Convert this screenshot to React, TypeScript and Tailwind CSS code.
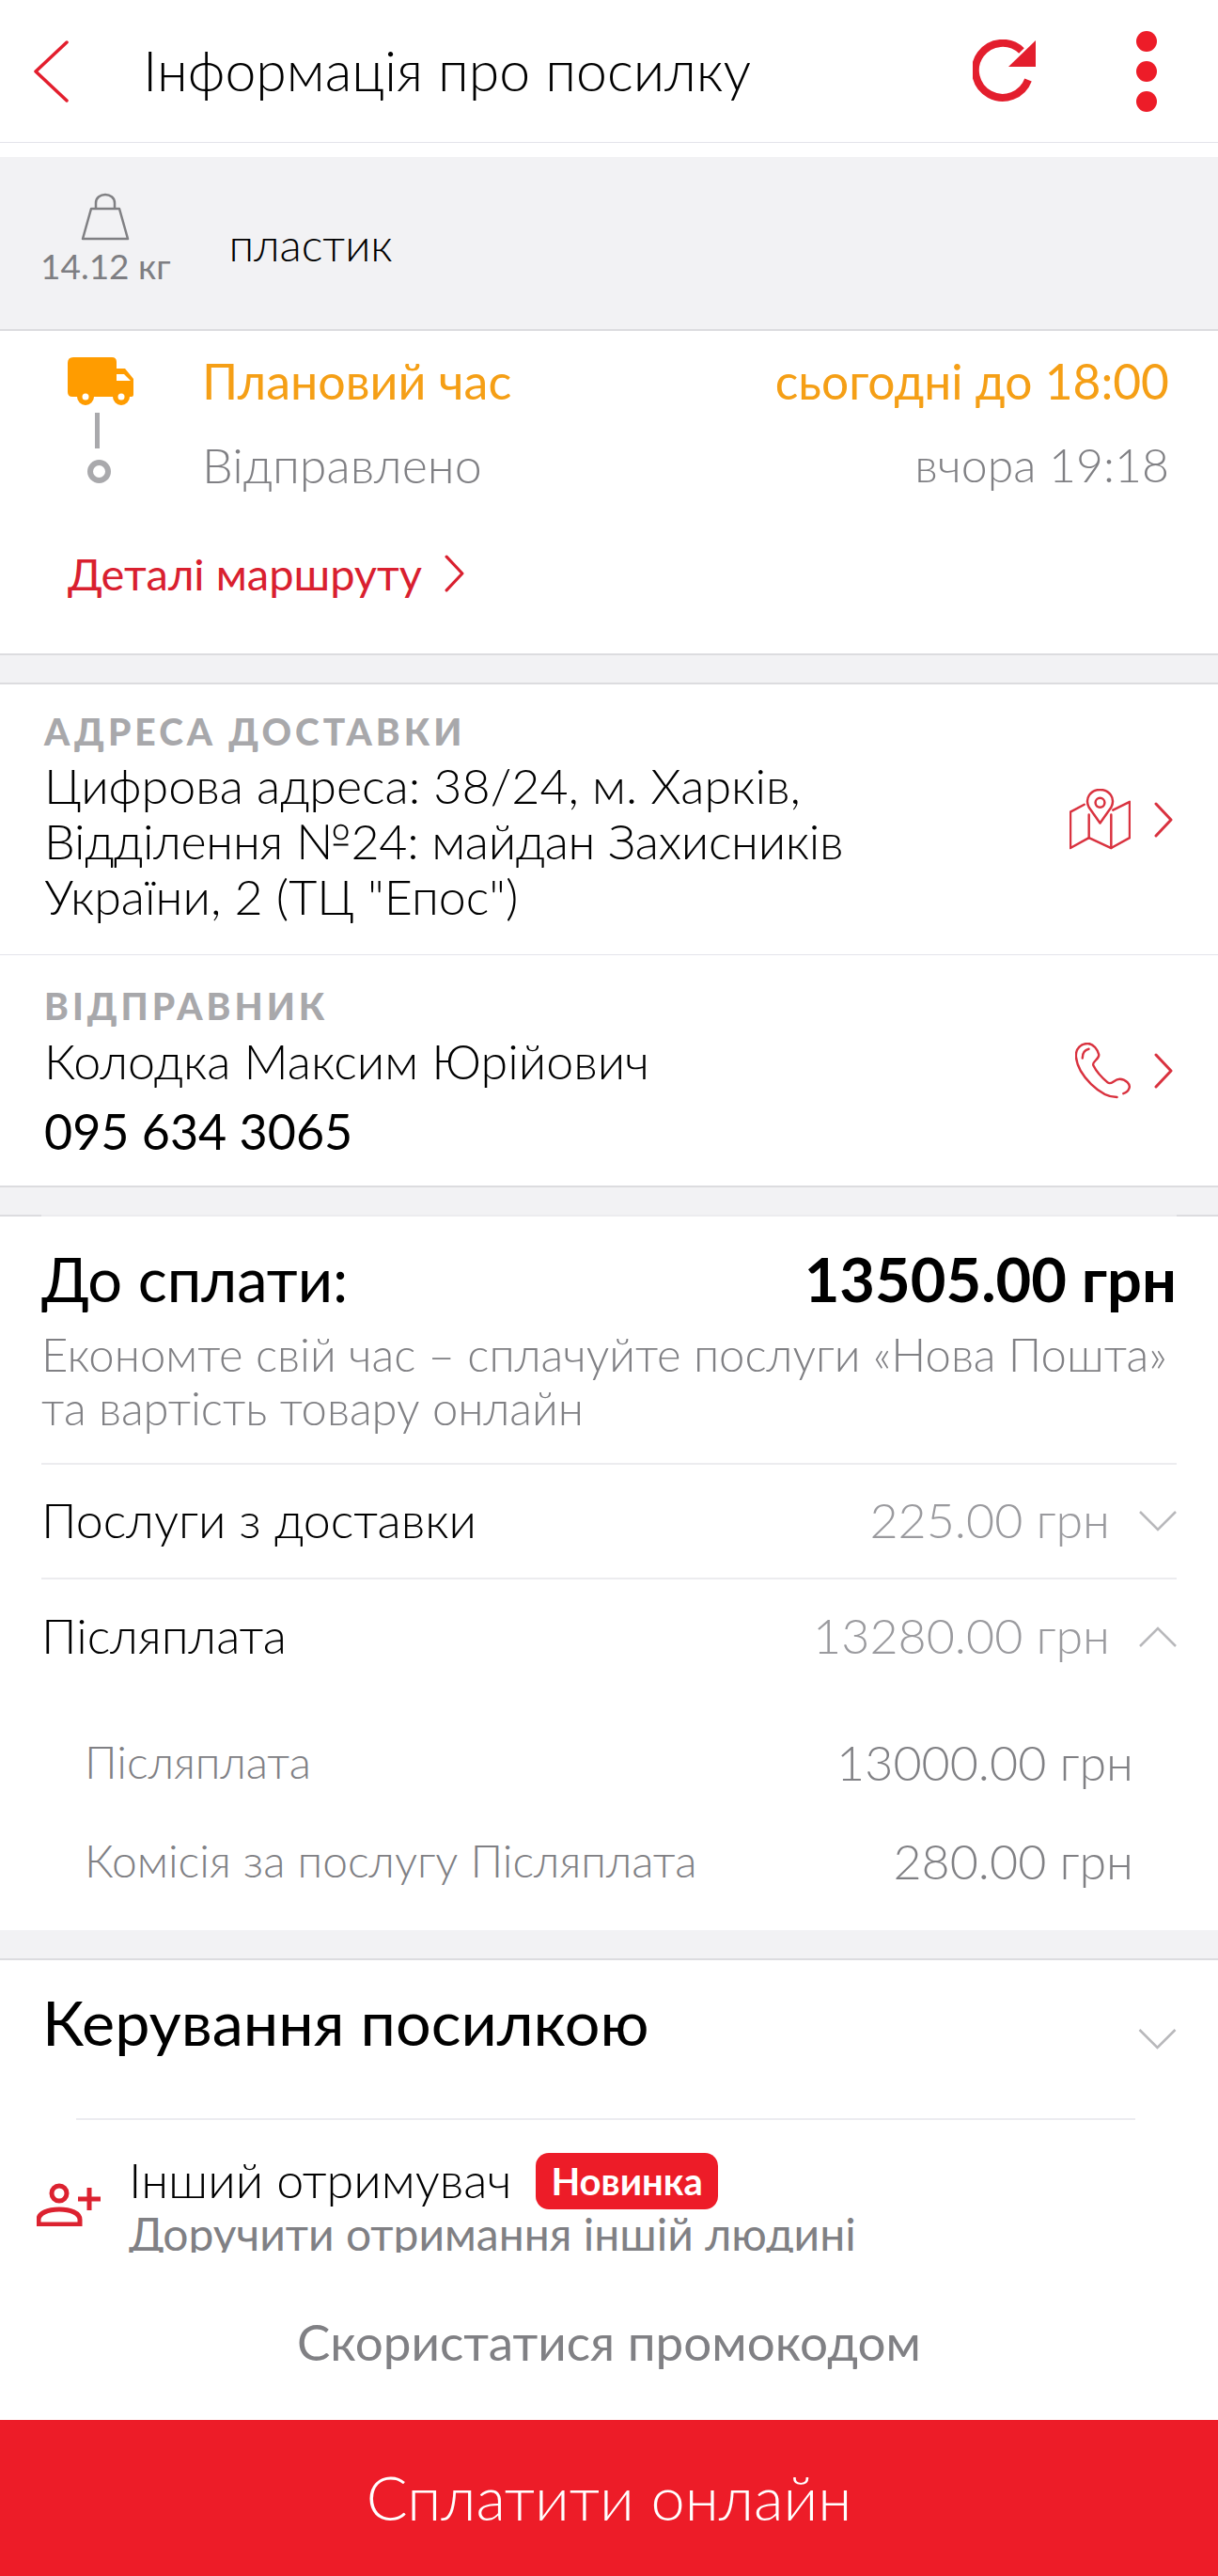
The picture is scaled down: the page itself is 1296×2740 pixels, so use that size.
const font = "font-['Lato','Noto_Sans',sans-serif]";

const Chevron = ({ className }: { className: string }) => (
  <svg viewBox="0 0 20 38" className={className} fill="none" stroke="currentColor" strokeWidth="3" strokeLinecap="round" strokeLinejoin="round">
    <path d="M2 2 L18 19 L2 36" />
  </svg>
);

const Down = ({ className }: { className: string }) => (
  <svg viewBox="0 0 40 22" className={className} fill="none" stroke="currentColor" strokeWidth="2.500"><path d="M1 1 L20 20 L39 1" /></svg>
);

const Up = ({ className }: { className: string }) => (
  <svg viewBox="0 0 40 22" className={className} fill="none" stroke="currentColor" strokeWidth="2.500"><path d="M1 21 L20 2 L39 21" /></svg>
);

const App = () => {
  return (
    <div className={`relative h-[2740px] w-[1296px] overflow-hidden bg-white text-black ${font} font-light`}>
      {/* header */}
      <div className="flex h-[152px] items-center border-b border-[#e4e4ea] pl-[35px] pr-[65px]">
        <svg viewBox="0 0 40 66" className="h-[66px] w-[40px] text-[#e31e2d]" fill="none" stroke="currentColor" strokeWidth="3.500" strokeLinecap="round" strokeLinejoin="round">
          <path d="M36 2 L3 33 L36 64" />
        </svg>
        <h1 className="mb-[3px] ml-[77px] text-[59px] leading-none whitespace-nowrap">Інформація про посилку</h1>
        <svg viewBox="0 0 68 68" className="ml-auto h-[68px] w-[68px] text-[#e31e2d]">
          <path d="M59 43 A29 29 0 1 1 52 12" fill="none" stroke="currentColor" strokeWidth="8" />
          <path d="M38 29 L67 1 L67 29 Z" fill="currentColor" />
        </svg>
        <div className="ml-[106px] flex flex-col gap-[10px]">
          <span className="h-[22px] w-[22px] rounded-full bg-[#ed1c28]" />
          <span className="h-[22px] w-[22px] rounded-full bg-[#ed1c28]" />
          <span className="h-[22px] w-[22px] rounded-full bg-[#ed1c28]" />
        </div>
      </div>

      {/* parcel */}
      <div className="mt-[15px] flex h-[185px] items-start border-b-2 border-[#dcdcdf] bg-[#f2f2f4] pl-[43px] pt-[38px]">
        <div className="flex flex-col items-center">
          <svg viewBox="0 0 52 52" className="h-[52px] w-[52px] text-[#808083]" fill="none" stroke="currentColor" strokeWidth="2.500" strokeLinejoin="round">
            <path d="M16 17 V11 C16 -1 36 -1 36 11 V17" />
            <path d="M11 17 H41 L50 49 H2 Z" />
          </svg>
          <span className="mt-[6px] text-[37px] leading-[40px] font-normal text-[#7e7e82]">14.12 кг</span>
        </div>
        <span className="ml-[62px] mt-[30px] text-[48px] leading-[50px]">пластик</span>
      </div>

      {/* status */}
      <div className="h-[343px] pl-[72px] pr-[52px] pt-[28px]">
        <div className="flex">
          <div className="flex w-[143px] flex-col items-start">
            <svg viewBox="0 0 70 52" className="h-[52px] w-[70px] text-[#ff9c00]" fill="currentColor">
              <path d="M6 0 H47 Q52 0 52 5 V12 H61 L70 23 V40 Q70 42 68 42 H66 A9 9 0 0 1 48 42 H28 A9 9 0 0 1 10 42 H5 Q0 42 0 37 V6 Q0 0 6 0 Z" />
              <path d="M52 18 V25 H67 L60 18 Z" fill="#fff" />
              <circle cx="19" cy="42" r="3.500" fill="#fff" />
              <circle cx="57" cy="42" r="3.500" fill="#fff" />
            </svg>
            <span className="ml-[29px] mt-[7px] h-[38px] w-[5px] bg-[#a9a9ac]" />
            <span className="ml-[21px] mt-[12px] h-[25px] w-[25px] rounded-full border-[6px] border-[#a9a9ac]" />
          </div>
          <div className="mt-[-2px] flex-1">
            <div className="flex justify-between font-normal leading-[54px] text-[#f59f16]">
              <span className="text-[52px]">Плановий час</span>
              <span className="text-[51.500px]">сьогодні до 18:00</span>
            </div>
            <div className="mt-[35px] flex justify-between leading-[54px] text-[#808084]">
              <span className="text-[52px]">Відправлено</span>
              <span className="text-[50px]">вчора 19:18</span>
            </div>
          </div>
        </div>
        <div className="mt-[62px] flex items-center gap-[24px] text-[#d9202f]">
          <span className="text-[47px] leading-[54px] font-normal">Деталі маршруту</span>
          <Chevron className="h-[40px] w-[21px]" />
        </div>
      </div>

      <div className="h-[33px] border-y-2 border-[#dcdcdf] bg-[#f2f2f4]" />

      {/* address */}
      <div className="flex h-[288px] items-center justify-between border-b border-[#e4e4ea] pl-[47px] pr-[48px]">
        <div className="self-start pt-[28px]">
          <div className="text-[39px] leading-[44px] font-black tracking-[4px] text-[#a8a8ab]">АДРЕСА ДОСТАВКИ</div>
          <div className="mt-[6px] text-[52px] leading-[59px] whitespace-nowrap">
            Цифрова адреса: 38/24, м. Харків,<br />
            <span className="tracking-[-0.3px]">Відділення №24: майдан Захисників</span><br />
            України, 2 (ТЦ "Епос")
          </div>
        </div>
        <div className="flex items-center gap-[25px] text-[#d9323f]">
          <svg viewBox="0 0 66 66" className="h-[65px] w-[65px]" fill="none" stroke="currentColor" strokeWidth="2.500" strokeLinejoin="round" strokeLinecap="round">
            <path d="M16 17 L1 25 V64 L21 53 L45 64 L65 53 V14 L47 23" />
            <path d="M21 28 V53 M45 28 V64" />
            <path d="M33 37 L21 20 C16 10 23 1 33 1 C43 1 50 10 45 20 Z" />
            <circle cx="33" cy="15" r="5" />
          </svg>
          <Chevron className="h-[38px] w-[20px]" />
        </div>
      </div>

      {/* sender */}
      <div className="flex h-[247px] items-center justify-between border-b-2 border-[#dcdcdf] pl-[47px] pr-[48px]">
        <div className="self-start pt-[32px]">
          <div className="text-[39px] leading-[44px] font-black tracking-[4px] text-[#a8a8ab]">ВІДПРАВНИК</div>
          <div className="mt-[7px] text-[52px] leading-[58px]">Колодка Максим Юрійович</div>
          <div className="mt-[17px] text-[52px] leading-[58px] font-normal">095 634 3065</div>
        </div>
        <div className="flex items-center gap-[24px] text-[#d9323f]">
          <svg viewBox="0 0 62 62" className="h-[60px] w-[60px]" fill="none" stroke="currentColor" strokeWidth="2.500" strokeLinejoin="round" strokeLinecap="round">
            <path d="M46 60 C28 60 3 36 1 16 C0 6 7 1 14 1 C20 1 25 8 26 13 C27 18 18 21 20 25 C24 33 30 39 36 44 C40 47 43 40 49 40 C55 40 62 46 59 51 C58 54 56 55 53 56" />
            <path d="M8 17 C8 11 11 8 15 7" />
          </svg>
          <Chevron className="h-[38px] w-[20px]" />
        </div>
      </div>

      <div className="h-[29px] bg-[#f2f2f4]" />
      <div className="flex h-[2px] justify-between bg-[#ececef]">
        <span className="w-[44px] bg-[#dcdcdf]" />
        <span className="w-[44px] bg-[#dcdcdf]" />
      </div>

      {/* payment */}
      <div className="h-[759px] px-[44px]">
        <div className="flex items-center justify-between pt-[33px]">
          <span className="text-[65px] leading-[66px] font-normal">До сплати:</span>
          <span className="text-[65px] leading-[66px] font-bold">13505.00 грн</span>
        </div>
        <p className="mt-[19px] text-[49px] leading-[57px] whitespace-nowrap text-[#808084]">
          Економте свій час – сплачуйте послуги «Нова Пошта»<br />
          та вартість товару онлайн
        </p>
        <div className="mt-[30px] flex h-[124px] items-center justify-between border-y-2 border-[#ececef]">
          <span className="pb-[4px] text-[52px]">Послуги з доставки</span>
          <span className="flex items-center gap-[31px] text-[52px] text-[#9a9a9e]">
            <span className="pb-[4px]">225.00 грн</span>
            <Down className="h-[22px] w-[40px] text-[#b8b8bb]" />
          </span>
        </div>
        <div className="flex h-[122px] items-center justify-between">
          <span className="pb-[4px] text-[52px]">Післяплата</span>
          <span className="flex items-center gap-[31px] text-[52px] text-[#9a9a9e]">
            <span className="pb-[4px]">13280.00 грн</span>
            <Up className="h-[22px] w-[40px] text-[#b8b8bb]" />
          </span>
        </div>
        <div className="mt-[37px] flex h-[70px] items-center justify-between pl-[46px] pr-[46px] text-[#808084]">
          <span className="text-[48px]">Післяплата</span>
          <span className="text-[52px]">13000.00 грн</span>
        </div>
        <div className="mt-[35px] flex h-[70px] items-center justify-between pl-[46px] pr-[46px] text-[#808084]">
          <span className="text-[48px]">Комісія за послугу Післяплата</span>
          <span className="text-[52px]">280.00 грн</span>
        </div>
      </div>

      <div className="h-[32px] border-b-2 border-[#dcdcdf] bg-[#f2f2f4]" />

      {/* manage */}
      <div className="pl-[45px] pr-[44px]">
        <div className="flex h-[168px] items-start justify-between pt-[25px]">
          <span className="text-[66.500px] leading-[80px] font-normal">Керування посилкою</span>
          <Down className="mt-[48px] h-[22px] w-[41px] text-[#b8b8bb]" />
        </div>
        <div className="ml-[36px] mr-[44px] border-t-2 border-[#ececf0]" />
        <div className="mt-[34px] flex items-start">
          <svg viewBox="0 0 70 46" className="ml-[-6px] mt-[33px] h-[46px] w-[70px] text-[#dc2230]" fill="none" stroke="currentColor" strokeWidth="5">
            <circle cx="24" cy="11" r="8" />
            <path d="M2 44 V39 C2 32 12 28 24 28 C36 28 46 32 46 39 V44 Z" />
            <path d="M44 17 H68 M56 5 V29" />
          </svg>
          <div className="ml-[28px]">
            <div className="flex items-center">
              <span className="pb-[4px] text-[52px] leading-[58px]">Інший отримувач</span>
              <span className="ml-[26px] rounded-[14px] bg-[#ed1c28] px-[16px] text-[40px] leading-[60px] font-bold text-white">Новинка</span>
            </div>
            <div className="mt-[-5px] text-[48px] leading-[60px] font-normal whitespace-nowrap text-[#808084]">Доручити отримання іншій людині</div>
          </div>
        </div>
      </div>

      {/* bottom actions sit over the scrolling content */}
      <div className="absolute inset-x-0 bottom-0">
        <div className="flex h-[178px] items-center justify-center bg-white pt-[12px] text-[53px] font-normal text-[#808084]">Скористатися промокодом</div>
        <div className="flex h-[166px] items-center justify-center bg-[#ed1c28] text-[65px] text-white">Сплатити онлайн</div>
      </div>
    </div>
  );
};

export default App;
